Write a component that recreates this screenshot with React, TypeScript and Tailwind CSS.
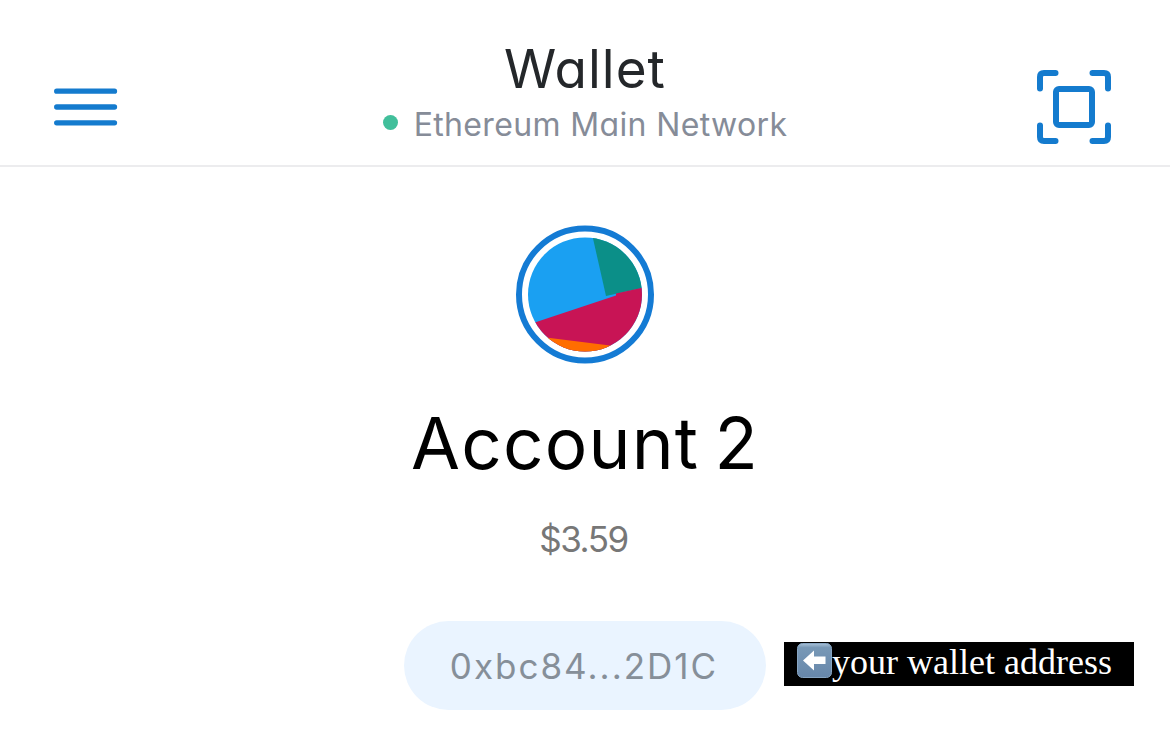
const MenuIcon = () => (
  <svg width="64" height="38" viewBox="0 0 64 38" fill="none">
    <path
      d="M2.700 3.200H60.500M2.700 19H60.500M2.700 34.800H60.500"
      stroke="#147bce"
      strokeWidth="5.300"
      strokeLinecap="round"
    />
  </svg>
);

const ScanIcon = () => (
  <svg
    width="74"
    height="74"
    viewBox="0 0 74 74"
    fill="none"
    stroke="#147bce"
    strokeWidth="6"
    strokeLinecap="round"
    strokeLinejoin="round"
  >
    <path d="M18.500 3H7Q3 3 3 7V18.500M55.500 3H67Q71 3 71 7V18.500M3 55.500V67Q3 71 7 71H18.500M71 55.500V67Q71 71 67 71H55.500" />
    <rect x="19" y="19" width="36" height="36" rx="3" />
  </svg>
);

const Avatar = () => (
  <svg className="overflow-visible" width="138" height="138" viewBox="0 0 138 138">
    <clipPath id="avatar">
      <circle cx="69" cy="68.500" r="57" />
    </clipPath>
    <circle cx="69" cy="68.500" r="66" fill="#fff" stroke="#147bd4" strokeWidth="6" />
    <g clipPath="url(#avatar)">
      <rect width="138" height="138" fill="#1aa0f2" />
      <path d="M76 8L90 70L130 61V8Z" fill="#0b8f88" />
      <path d="M10 99.500L100 69.500V67.500L130 61V130H10Z" fill="#c81455" />
      <path d="M10 109L130 124V138H10Z" fill="#ff6d00" />
    </g>
  </svg>
);

const LeftArrow = () => (
  <svg width="35" height="35" viewBox="0 0 35 35">
    <defs>
      <linearGradient id="key" x1="0" y1="0" x2="0" y2="1">
        <stop offset="0" stopColor="#a9c2d8" />
        <stop offset="0.120" stopColor="#7898b6" />
        <stop offset="1" stopColor="#6787aa" />
      </linearGradient>
    </defs>
    <rect x="0.500" y="0.500" width="34" height="34" rx="5" fill="url(#key)" stroke="#87a5c2" />
    <path d="M6 17.500L17 7.500V13.500H28.500V21H17V27.500Z" fill="#fff" />
  </svg>
);

export default function App() {
  return (
    <main className="h-[743px] overflow-hidden bg-white font-['Inter',sans-serif] [font-feature-settings:'cv11']">
      {/* Header */}
      <header className="flex h-[167px] items-start justify-between border-b-2 border-[#ececee] pl-[54px] pr-[59px]">
        <div className="w-[74px] pt-[88px]">
          <MenuIcon />
        </div>
        <div className="flex flex-col items-center pt-[41px] pl-[5px]">
          <h1 className="text-[53px] leading-[56px] tracking-[1px] text-[#24272a]">Wallet</h1>
          <p className="flex items-center gap-4 whitespace-nowrap text-[32px] leading-[56px] tracking-[0.36px] text-[#868c98]">
            <span className="mb-1.5 size-[15px] rounded-full bg-[#41bf9b]" />
            <span>Ethereum Main Network</span>
          </p>
        </div>
        <div className="pt-[70px]">
          <ScanIcon />
        </div>
      </header>

      {/* Account */}
      <section className="flex flex-col items-center pt-[59px]">
        <Avatar />
        <h2 className="mt-[39px] text-[71px] leading-20 tracking-[1.2px] text-black [word-spacing:-6px]">
          Account 2
        </h2>
        <p className="mt-[36px] mr-[3px] text-[35px] leading-[40px] tracking-[-1.5px] text-[#777]">
          $3.59
        </p>
      </section>

      {/* Address */}
      <section className="mt-[62px] grid grid-cols-[1fr_362px_1fr] items-center">
        <div className="col-start-2 flex h-[89px] items-center justify-center rounded-full bg-[#eaf4ff] pt-0.5 pr-0.5 text-[35px] tracking-[2px] text-[#868f99]">
          <span>0xbc84...2D1C</span>
        </div>
        <div className="mb-[3px] ml-[18px] flex h-11 w-[350px] items-center bg-black pl-[13px] pb-[7px]">
          <LeftArrow />
          <span className="whitespace-nowrap pt-0.5 font-['Liberation_Serif',serif] text-[36px] leading-10 text-white">
            your wallet address
          </span>
        </div>
      </section>
    </main>
  );
}
